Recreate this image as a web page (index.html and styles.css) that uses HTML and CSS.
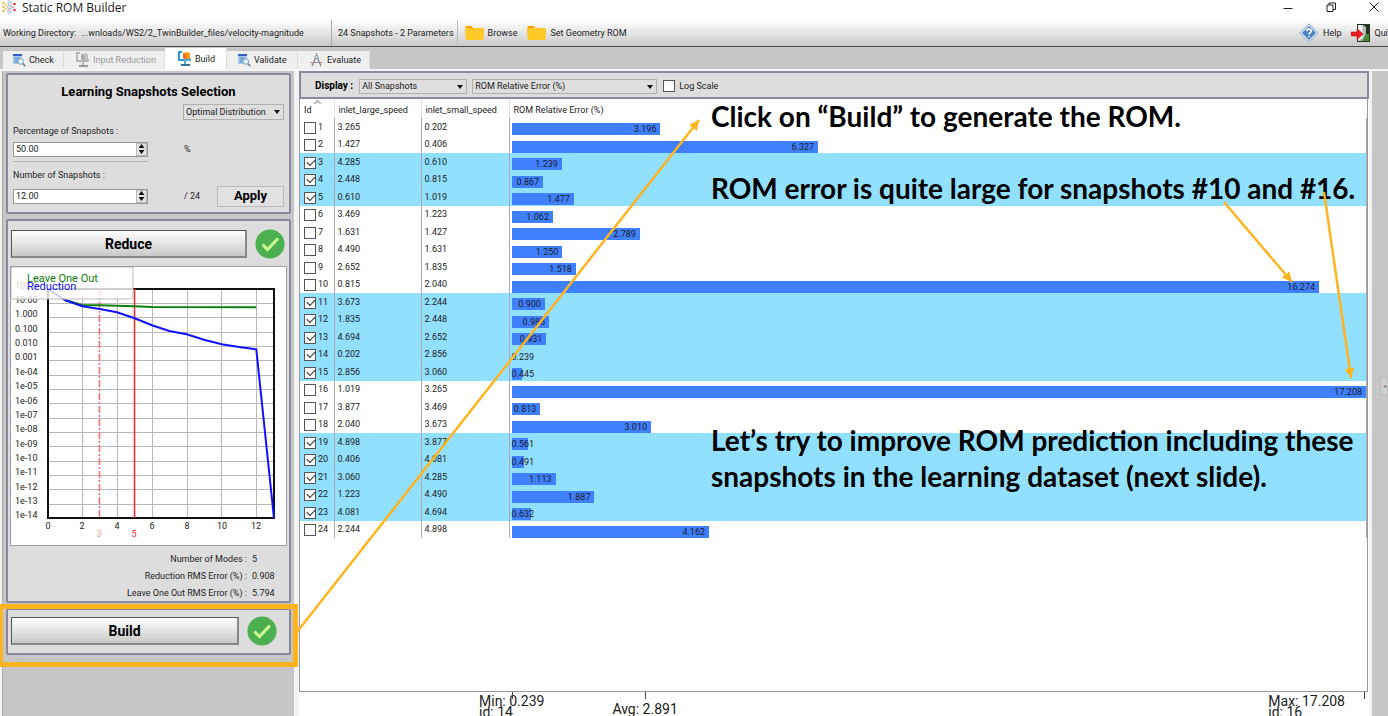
FILE: index.html
```html
<!DOCTYPE html>
<html lang="en">
<head>
<meta charset="utf-8">
<title>Static ROM Builder</title>
<link rel="stylesheet" href="styles.css">
</head>
<body>
<div class="app">
  <header class="titlebar">
    <svg class="app-icon" width="14" height="14" viewBox="0 0 14 14"><g fill="#f2b632"><circle cx="1.500" cy="3" r="1.200"/><circle cx="1.500" cy="7" r="1.200"/><circle cx="1.500" cy="11" r="1.200"/><circle cx="4" cy="5" r="1"/><circle cx="4" cy="9" r="1"/></g><g fill="none" stroke="#8fa6c4"><circle cx="7.500" cy="2.500" r="1.600"/><circle cx="7.500" cy="7" r="1.800"/><circle cx="7.500" cy="11.500" r="1.600"/></g><g fill="#dc3545"><circle cx="12.500" cy="4" r="1.300"/><circle cx="12.500" cy="10" r="1.300"/><circle cx="11" cy="7" r=".8"/></g></svg>
    <h1 class="app-title">Static ROM Builder</h1>
    <div class="window-buttons">
      <button aria-label="Minimize"><svg width="10" height="10" viewBox="0 0 10 10"><path d="M0.500 6.500h9" stroke="#222" fill="none"/></svg></button>
      <button aria-label="Restore"><svg width="10" height="10" viewBox="0 0 10 10"><path d="M1 3h6v6.500h-6zM3 3V1h6.500v6.500H7" stroke="#222" fill="none"/></svg></button>
      <button aria-label="Close"><svg width="10" height="10" viewBox="0 0 10 10"><path d="M.5.5l9 9M9.500.5l-9 9" stroke="#222" fill="none"/></svg></button>
    </div>
  </header>

  <div class="toolbar">
    <div class="directory"><span>Working Directory:</span><span>...wnloads/WS2/2_TwinBuilder_files/velocity-magnitude</span></div>
    <div class="summary">24 Snapshots - 2 Parameters</div>
    <button class="tool"><svg width="19" height="16" viewBox="0 0 19 16"><path d="M.5 2q0-1 1-1h5l2 2h9q1 0 1 1v5H.5z" fill="#ffa000"/><path d="M.5 4.500q0-1.500 1-1.500h16q1.200 0 1.200 1v10q0 1-1 1H1.500q-1 0-1-1z" fill="#ffc928"/></svg>Browse</button>
    <button class="tool"><svg width="19" height="16" viewBox="0 0 19 16"><path d="M.5 2q0-1 1-1h5l2 2h9q1 0 1 1v5H.5z" fill="#ffa000"/><path d="M.5 4.500q0-1.500 1-1.500h16q1.200 0 1.200 1v10q0 1-1 1H1.500q-1 0-1-1z" fill="#ffc928"/></svg>Set Geometry ROM</button>
    <div class="toolbar-end">
      <button class="tool"><svg width="20" height="20" viewBox="0 0 20 20"><path d="M10 .8L19.200 10 10 19.200.8 10z" fill="#dce7f4" stroke="#8ca8cc"/><path d="M10 3l7 7-7 7-7-7z" fill="#4c82c4"/><path d="M7.800 8.200q.2-2 2.300-2 2.200.1 2.200 1.900 0 1-1.200 1.700-1 .6-1 1.600M10.100 13v1.300" fill="none" stroke="#fff" stroke-width="1.700"/></svg>Help</button>
      <button class="tool"><svg width="19" height="20" viewBox="0 0 19 20"><path d="M6 1h13v18H6z" fill="#26351d"/><path d="M7 2h5v15l-5 1z" fill="#eee" /><path d="M11.500 2L15 4v14h-8l4.500-3z" fill="#b9b9b9"/><path d="M15 11h3v7h-7z" fill="#4b8a35"/><path d="M0 9h6V5.500l6 5.500-6 5.500V13H0z" fill="#ee1c24" stroke="#b40000" stroke-width=".5"/></svg>Quit</button>
    </div>
  </div>

  <nav class="tabs">
    <button class="tab tab-check"><svg width="14" height="14" viewBox="0 0 14 14"><path d="M1 1h9v10H1z" fill="#a9cbe8"/><path d="M1 1h9v2H1z" fill="#315fc4"/><path d="M2.500 5h5M2.500 7h4M2.500 9h3" stroke="#4c8bc6"/><circle cx="8.800" cy="8.500" r="2.800" fill="#eef7fc" stroke="#6ba0bd"/><path d="M10.800 10.500l2.500 2.700" stroke="#5b7f99" stroke-width="1.500"/></svg>Check</button>
    <button class="tab tab-input" disabled><svg width="15" height="16" viewBox="0 0 15 16"><path d="M5 1H2v8h5" fill="none" stroke="#b4b4b4" stroke-width="2"/><path d="M6 2l4-1 3 1v5l-3 2-4-2z" fill="#c2c2c2"/><path d="M6 2l3.500 2v5L6 7z" fill="#a6a6a6"/><path d="M13 7v2H8v4" fill="none" stroke="#aaa" stroke-width="1.500"/><path d="M4 14h9" stroke="#999" stroke-width="2"/></svg>Input Reduction</button>
    <button class="tab tab-build"><svg width="15" height="16" viewBox="0 0 15 16"><path d="M5 1H2v8h5" fill="none" stroke="#2b9cd3" stroke-width="2"/><path d="M6 2l4-1 3 1v5l-3 2-4-2z" fill="#ff9c1e"/><path d="M6 2l3.500 2v5L6 7z" fill="#ed6f23"/><path d="M13 7v2H8v4" fill="none" stroke="#2b8fbd" stroke-width="1.500"/><path d="M4 14h9" stroke="#35728f" stroke-width="2"/></svg>Build</button>
    <button class="tab tab-validate"><svg width="14" height="14" viewBox="0 0 14 14"><path d="M1 1h9v10H1z" fill="#a9cbe8"/><path d="M1 1h9v2H1z" fill="#315fc4"/><path d="M2.500 5h5M2.500 7h4M2.500 9h3" stroke="#4c8bc6"/><circle cx="8.800" cy="8.500" r="2.800" fill="#eef7fc" stroke="#6ba0bd"/><path d="M10.800 10.500l2.500 2.700" stroke="#5b7f99" stroke-width="1.500"/></svg>Validate</button>
    <button class="tab tab-evaluate"><svg width="13" height="14" viewBox="0 0 13 14"><path d="M6.500 0v3" stroke="#888"/><path d="M6 4L2 13M7 4l4 9" stroke="#7d8994" stroke-width="1.300"/><circle cx="6.500" cy="3.800" r="1.500" fill="#fff" stroke="#7d8994"/><path d="M.5 9.500h2M10.500 9.500h2" stroke="#d05a52"/><path d="M4.500 9.500h4" stroke="#7d8994"/></svg>Evaluate</button>
  </nav>

  <main class="content">
    <aside class="sidebar">
      <section class="panel selection">
        <h2 class="panel-title">Learning Snapshots Selection</h2>
        <div class="pick distribution"><select aria-label="Distribution"><option>Optimal Distribution</option></select></div>
        <label class="field-label" for="percent">Percentage of Snapshots :</label>
        <div class="field">
          <div class="spin"><input id="percent" type="text" value="50.00"><span class="steps"><button class="up" aria-label="Increase percentage"></button><button class="down" aria-label="Decrease percentage"></button></span></div>
          <span class="unit">%</span>
        </div>
        <hr class="rule">
        <label class="field-label second" for="number">Number of Snapshots :</label>
        <div class="field">
          <div class="spin"><input id="number" type="text" value="12.00"><span class="steps"><button class="up" aria-label="Increase number"></button><button class="down" aria-label="Decrease number"></button></span></div>
          <span class="unit">/ 24</span>
          <button class="apply">Apply</button>
        </div>
      </section>

      <section class="panel reduce">
        <div class="action">
          <button class="big-button">Reduce</button>
          <svg class="done" width="30" height="30" viewBox="0 0 30 30"><circle cx="15" cy="15" r="14.600" fill="#4caf50"/><path d="M7.500 15.500l5 5L23 9.500" fill="none" stroke="#ccff90" stroke-width="3"/></svg>
        </div>
        <div class="chart">
          <svg width="275" height="278" viewBox="0 0 275 278">
            <path class="grid" d="M37 36.500h226M37 50.500h226M37 65.500h226M37 79.500h226M37 93.500h226M37 108.500h226M37 122.500h226M37 136.500h226M37 151.500h226M37 165.500h226M37 179.500h226M37 194.500h226M37 208.500h226M37 222.500h226M37 237.500h226M71.500 22v229M106.500 22v229M141.500 22v229M176.500 22v229M210.500 22v229M245.500 22v229"/>
            <rect x="37" y="22" width="226" height="229" fill="none" stroke="#111" stroke-width="2"/>
            <path d="M88.500 22v229" stroke="#f66" stroke-width="1.500" stroke-dasharray="7 2 2 2"/>
            <path d="M123.500 22v229" stroke="#f22" stroke-width="1.500"/>
            <polyline points="54,33 71.300,38 88.700,38.300 123.700,39.300 141,40 245.300,40.300" fill="none" stroke="#0a800a" stroke-width="2"/>
            <polyline points="37,22 54.300,33.300 71.300,39.300 88.700,42 106,45.300 123.700,51.300 141,58.300 158.300,64 175.700,67.300 193,72.700 210.700,77.300 228,80 245.300,82.300 263,251.300" fill="none" stroke="#11f" stroke-width="2"/>
            <g class="axis">
              <text x="4" y="22">100.0</text><text x="4" y="36">10.00</text><text x="4" y="50">1.000</text><text x="4" y="65">0.100</text><text x="4" y="79">0.010</text><text x="4" y="93">0.001</text><text x="4" y="108">1e-04</text><text x="4" y="122">1e-05</text><text x="4" y="137">1e-06</text><text x="4" y="151">1e-07</text><text x="4" y="165">1e-08</text><text x="4" y="180">1e-09</text><text x="4" y="194">1e-10</text><text x="4" y="208">1e-11</text><text x="4" y="223">1e-12</text><text x="4" y="237">1e-13</text><text x="4" y="251">1e-14</text>
            </g>
            <g class="axis middle">
              <text x="37" y="262">0</text><text x="71" y="262">2</text><text x="106" y="262">4</text><text x="141" y="262">6</text><text x="176" y="262">8</text><text x="211" y="262">10</text><text x="245" y="262">12</text>
              <text x="88" y="270" class="pale">3</text><text x="123" y="270" class="red">5</text>
            </g>
            <rect x="0" y="0" width="122" height="32" rx="2" fill="#fff" fill-opacity=".8" stroke="#bbb"/>
            <text x="16" y="15" class="legend green">Leave One Out</text>
            <text x="16" y="23" class="legend blue">Reduction</text>
          </svg>
        </div>
        <dl class="stats">
          <dt>Number of Modes :</dt><dd>5</dd>
          <dt>Reduction RMS Error (%) :</dt><dd>0.908</dd>
          <dt>Leave One Out RMS Error (%) :</dt><dd>5.794</dd>
        </dl>
      </section>

      <section class="panel build">
        <div class="action">
          <button class="big-button">Build</button>
          <svg class="done" width="30" height="30" viewBox="0 0 30 30"><circle cx="15" cy="15" r="14.600" fill="#4caf50"/><path d="M7.500 15.500l5 5L23 9.500" fill="none" stroke="#ccff90" stroke-width="3"/></svg>
        </div>
      </section>
    </aside>

    <section class="results">
      <div class="display-bar">
        <span class="display-label">Display :</span>
        <div class="pick snapshots"><select aria-label="Snapshots shown"><option>All Snapshots</option></select></div>
        <div class="pick measure"><select aria-label="Measure shown"><option>ROM Relative Error (%)</option></select></div>
        <label class="log"><input class="check" type="checkbox">Log Scale</label>
      </div>
      <div class="table-area">
        <table class="data">
          <colgroup><col class="c-id"><col class="c-large"><col class="c-small"><col></colgroup>
          <thead><tr><th class="sorted">Id</th><th>inlet_large_speed</th><th>inlet_small_speed</th><th>ROM Relative Error (%)</th></tr></thead>
          <tbody>
            <tr><td><label><input class="check" type="checkbox">1</label></td><td>3.265</td><td>0.202</td><td><div class="bar"><i style="width:17.43%"></i><b style="width:17.43%">3.196</b></div></td></tr>
            <tr><td><label><input class="check" type="checkbox">2</label></td><td>1.427</td><td>0.406</td><td><div class="bar"><i style="width:35.88%"></i><b style="width:35.88%">6.327</b></div></td></tr>
            <tr class="on"><td><label><input class="check" type="checkbox" checked>3</label></td><td>4.285</td><td>0.610</td><td><div class="bar"><i style="width:5.89%"></i><b style="width:5.89%">1.239</b></div></td></tr>
            <tr class="on"><td><label><input class="check" type="checkbox" checked>4</label></td><td>2.448</td><td>0.815</td><td><div class="bar"><i style="width:3.70%"></i><b style="width:3.70%">0.867</b></div></td></tr>
            <tr class="on"><td><label><input class="check" type="checkbox" checked>5</label></td><td>0.610</td><td>1.019</td><td><div class="bar"><i style="width:7.30%"></i><b style="width:7.30%">1.477</b></div></td></tr>
            <tr><td><label><input class="check" type="checkbox">6</label></td><td>3.469</td><td>1.223</td><td><div class="bar"><i style="width:4.85%"></i><b style="width:4.85%">1.062</b></div></td></tr>
            <tr><td><label><input class="check" type="checkbox">7</label></td><td>1.631</td><td>1.427</td><td><div class="bar"><i style="width:15.03%"></i><b style="width:15.03%">2.789</b></div></td></tr>
            <tr><td><label><input class="check" type="checkbox">8</label></td><td>4.490</td><td>1.631</td><td><div class="bar"><i style="width:5.96%"></i><b style="width:5.96%">1.250</b></div></td></tr>
            <tr><td><label><input class="check" type="checkbox">9</label></td><td>2.652</td><td>1.835</td><td><div class="bar"><i style="width:7.54%"></i><b style="width:7.54%">1.518</b></div></td></tr>
            <tr><td><label><input class="check" type="checkbox">10</label></td><td>0.815</td><td>2.040</td><td><div class="bar"><i style="width:94.50%"></i><b style="width:94.50%">16.274</b></div></td></tr>
            <tr class="on"><td><label><input class="check" type="checkbox" checked>11</label></td><td>3.673</td><td>2.244</td><td><div class="bar"><i style="width:3.90%"></i><b style="width:3.90%">0.900</b></div></td></tr>
            <tr class="on"><td><label><input class="check" type="checkbox" checked>12</label></td><td>1.835</td><td>2.448</td><td><div class="bar"><i style="width:4.40%"></i><b style="width:4.40%">0.985</b></div></td></tr>
            <tr class="on"><td><label><input class="check" type="checkbox" checked>13</label></td><td>4.694</td><td>2.652</td><td><div class="bar"><i style="width:4.08%"></i><b style="width:4.08%">0.931</b></div></td></tr>
            <tr class="on"><td><label><input class="check" type="checkbox" checked>14</label></td><td>0.202</td><td>2.856</td><td><div class="bar"><i style="width:0%"></i><b style="width:0%">0.239</b></div></td></tr>
            <tr class="on"><td><label><input class="check" type="checkbox" checked>15</label></td><td>2.856</td><td>3.060</td><td><div class="bar"><i style="width:1.21%"></i><b style="width:1.21%">0.445</b></div></td></tr>
            <tr><td><label><input class="check" type="checkbox">16</label></td><td>1.019</td><td>3.265</td><td><div class="bar"><i style="width:100%"></i><b style="width:100%">17.208</b></div></td></tr>
            <tr><td><label><input class="check" type="checkbox">17</label></td><td>3.877</td><td>3.469</td><td><div class="bar"><i style="width:3.38%"></i><b style="width:3.38%">0.813</b></div></td></tr>
            <tr><td><label><input class="check" type="checkbox">18</label></td><td>2.040</td><td>3.673</td><td><div class="bar"><i style="width:16.33%"></i><b style="width:16.33%">3.010</b></div></td></tr>
            <tr class="on"><td><label><input class="check" type="checkbox" checked>19</label></td><td>4.898</td><td>3.877</td><td><div class="bar"><i style="width:1.90%"></i><b style="width:1.90%">0.561</b></div></td></tr>
            <tr class="on"><td><label><input class="check" type="checkbox" checked>20</label></td><td>0.406</td><td>4.081</td><td><div class="bar"><i style="width:1.49%"></i><b style="width:1.49%">0.491</b></div></td></tr>
            <tr class="on"><td><label><input class="check" type="checkbox" checked>21</label></td><td>3.060</td><td>4.285</td><td><div class="bar"><i style="width:5.15%"></i><b style="width:5.15%">1.113</b></div></td></tr>
            <tr class="on"><td><label><input class="check" type="checkbox" checked>22</label></td><td>1.223</td><td>4.490</td><td><div class="bar"><i style="width:9.71%"></i><b style="width:9.71%">1.887</b></div></td></tr>
            <tr class="on"><td><label><input class="check" type="checkbox" checked>23</label></td><td>4.081</td><td>4.694</td><td><div class="bar"><i style="width:2.32%"></i><b style="width:2.32%">0.632</b></div></td></tr>
            <tr><td><label><input class="check" type="checkbox">24</label></td><td>2.244</td><td>4.898</td><td><div class="bar"><i style="width:23.12%"></i><b style="width:23.12%">4.162</b></div></td></tr>
          </tbody>
        </table>
      </div>
      <footer class="scale">
        <div class="mark min">Min: 0.239<br>id: 14</div>
        <div class="mark avg">Avg: 2.891</div>
        <div class="mark max">Max: 17.208<br>id: 16</div>
      </footer>
    </section>
    <div class="edge"><button class="handle" aria-label="Expand side panel">◂</button></div>
  </main>

  <div class="notes">
    <p class="note note-build">Click on “Build” to generate the ROM.</p>
    <p class="note note-error">ROM error is quite large for snapshots #10 and #16.</p>
    <p class="note note-next">Let’s try to improve ROM prediction including these<br>snapshots in the learning dataset (next slide).</p>
    <div class="highlight"></div>
    <svg class="arrows" width="1388" height="716" viewBox="0 0 1388 716">
      <defs><marker id="head" markerUnits="userSpaceOnUse" markerWidth="12" markerHeight="12" refX="10" refY="5" orient="auto"><path d="M0 0l10 5-10 5z" fill="#ffb41f"/></marker></defs>
      <g stroke="#ffb41f" stroke-width="2.500" fill="none"><path d="M297 632L699 120" marker-end="url(#head)"/><path d="M1224 202L1292 282" marker-end="url(#head)"/><path d="M1324 192L1351 378" marker-end="url(#head)"/></g>
    </svg>
  </div>
</div>
</body>
</html>
```
FILE: styles.css
```css
* { box-sizing: border-box; }
body { margin: 0; font: 9px/12px Roboto, "Liberation Sans", sans-serif; color: #1c1c1c; background: #fff; }
button, input, select { font: inherit; color: inherit; margin: 0; }
button { padding: 0; border: 0; background: none; }
h1, h2, p, dl, dd { margin: 0; }
svg { display: block; flex: none; }
.app { position: relative; height: 100vh; overflow: hidden; display: flex; flex-direction: column; }

.titlebar { display: flex; align-items: center; height: 20px; padding: 0 9px 6px 2px; flex: none; }
.app-title { font: 12px/15px "Open Sans", "Noto Sans", sans-serif; margin-left: 6px; }
.window-buttons { display: flex; gap: 33px; margin-left: auto; }

.toolbar { display: flex; align-items: center; height: 27px; flex: none; background: linear-gradient(#fff, #c9c9c9); border-bottom: 1px solid #4a4a4a; padding-left: 3px; overflow: hidden; white-space: nowrap; }
.directory { display: flex; gap: 5px; width: 328px; }
.summary { border-left: 1px solid #aaa; border-right: 1px solid #bbb; padding: 0 3px 0 6px; line-height: 26px; margin-right: 7px; }
.tool { display: flex; align-items: center; gap: 4px; margin-right: 10px; }
.toolbar-end { display: flex; margin-left: auto; width: 89px; flex: none; }

.tabs { display: flex; align-items: flex-end; height: 22px; padding-left: 3px; background: #c6c6c6; flex: none; }
.tab { display: flex; align-items: center; gap: 3px; height: 18px; background: #efefef; border-right: 1px solid #ddd; padding-left: 9px; }
.tab-check { width: 61px; }
.tab-input { width: 101px; color: #999; padding-left: 11px; }
.tab-build { width: 62px; height: 21px; background: #fff; padding-left: 12px; }
.tab-validate { width: 71px; padding-left: 10px; }
.tab-evaluate { width: 72px; padding-left: 12px; gap: 4px; }

.content { display: flex; flex: 1; min-height: 0; padding-left: 2px; border-top: 2px solid #f6f6f6; background: #f3f3f3; }
.sidebar { display: flex; flex-direction: column; gap: 5px; width: 292px; flex: none; background: #c6c6c6; border-left: 1px solid #aaa; padding: 2px 3px 0; }
.panel { background: #ddd; border: 2px solid #89899b; border-radius: 2px; }
.selection { height: 141px; padding: 9px 5px 0; flex: none; }
.panel-title { font-size: 13px; line-height: 16px; text-align: center; color: #000; }
.pick { position: relative; height: 15px; }
.pick select { appearance: none; display: block; width: 100%; height: 100%; padding: 0 2px; border: 1px solid #b0b0b0; border-radius: 0; background: #dedede; line-height: 12px; }
.pick::after { content: ""; position: absolute; right: 4px; top: 6px; border: 3px solid transparent; border-top: 4px solid #111; border-bottom: 0; }
.distribution { width: 101px; margin: 4px 0 0 auto; height: 16px; }
.field-label { display: block; line-height: 12px; margin-top: 5px; }
.field-label.second { margin-top: 7px; }
.field { display: flex; align-items: center; height: 22px; margin-top: 1px; margin-bottom: 1px; }
.second + .field { margin-top: 4px; }
.spin { display: flex; width: 135px; height: 15px; border: 1px solid #999; background: #fff; }
.spin input { flex: 1; min-width: 0; border: 0; padding: 0 2px; background: none; }
.steps { display: flex; flex-direction: column; justify-content: center; align-items: center; gap: 2px; width: 11px; background: #e4e4e4; border: 1px solid #bbb; }
.up, .down { width: 6px; height: 4px; background: #111; clip-path: polygon(50% 0, 100% 100%, 0 100%); }
.down { clip-path: polygon(0 0, 100% 0, 50% 100%); }
.unit { margin-left: 36px; }
.rule { width: 135px; height: 1px; margin: 0; border: 0; background: #b2b2b2; }
.apply { width: 67px; height: 21px; margin-left: auto; border: 1px solid #bbb; background: #e1e1e1; font-weight: bold; font-size: 13px; color: #000; }

.reduce { height: 384px; padding: 8px 2px 0; flex: none; }
.action { display: flex; align-items: center; gap: 8px; height: 30px; padding: 0 2px 0 1px; }
.big-button { flex: 1; height: 28px; border: 1px solid #555; border-right: 2px solid #888; border-bottom: 2px solid #888; background: linear-gradient(#fff, #c8c8c8); font-weight: bold; font-size: 14px; color: #000; }
.chart { height: 280px; margin-top: 7px; border: 1px solid #9a9fa6; background: #fff; }
.grid { stroke: #b9b9b9; fill: none; }
.axis { font-size: 9px; fill: #1c1c1c; }
.middle { text-anchor: middle; }
.pale { fill: #f99; }
.red { fill: #f22; }
.legend { font-size: 11px; }
.green { fill: #0a800a; }
.blue { fill: #11f; }
.stats { display: grid; grid-template-columns: 1fr 35px; column-gap: 5px; line-height: 17px; margin-top: 5px; }
.stats dt { text-align: right; }
.build { height: 47px; padding: 6px 10px 0 2px; flex: none; }

.results { flex: 1; min-width: 0; margin-left: 5px; display: flex; flex-direction: column; background: #fff; }
.display-bar { display: flex; align-items: center; height: 28px; flex: none; background: #ddd; border: 2px solid #89899b; padding: 2px 0 0 14px; }
.display-label { font-weight: bold; font-size: 10px; color: #000; margin-right: 6px; }
.snapshots { width: 108px; margin-right: 5px; }
.measure { width: 185px; margin-right: 6px; }
.log { display: flex; align-items: center; gap: 4px; }
.check { appearance: none; position: relative; width: 12px; height: 12px; border: 1px solid #555; background: #fff; flex: none; }
.check:checked::after { content: ""; position: absolute; left: 2px; top: 1px; width: 7px; height: 4px; border: solid #222; border-width: 0 0 1px 1px; transform: rotate(-45deg); }

.table-area { flex: 1; min-height: 0; border: 1px solid #999; border-top: 0; margin-right: 1px; }
.data { width: 100%; border-collapse: collapse; table-layout: fixed; }
.c-id { width: 34px; }
.c-large { width: 87px; }
.c-small { width: 88px; }
.data th { position: relative; height: 19px; padding: 2px 0 0 4px; font-weight: normal; text-align: left; }
.data th + th { border-left: 1px solid #e2e2e2; }
.sorted::before { content: ""; position: absolute; left: 15px; top: 2px; width: 4px; height: 4px; border: solid #888; border-width: 1px 0 0 1px; transform: rotate(45deg); }
.data td { height: 17px; line-height: 17px; padding: 0 0 0 3px; vertical-align: bottom; }
.data tr:nth-child(odd) td { height: 18px; }
.data td + td { border-left: 1px solid #aaa; }
.data td:first-child { padding-left: 4px; }
.data td:last-child { padding-left: 2px; border-right: 1px solid #aaa; vertical-align: top; }
.data td label { display: flex; align-items: center; gap: 2px; line-height: 17px; }
.data .on { background: #91e0ff; }
.bar { display: grid; align-items: center; height: 12px; margin-top: 5px; line-height: 12px; }
.bar i, .bar b { grid-area: 1 / 1; }
.bar i { height: 12px; background: #3f80ff; }
.bar b { min-width: 26px; padding-right: 4px; text-align: right; font-weight: normal; }

.scale { display: flex; height: 24px; flex: none; font-size: 14px; line-height: 11px; padding: 4px 24px 0 180px; }
.mark { position: relative; white-space: nowrap; }
.mark::before { content: ""; position: absolute; left: 33px; top: -4px; width: 1px; height: 7px; background: #444; }
.avg { margin-left: 68px; padding-top: 8px; }
.max { margin-left: auto; }
.max::before { left: auto; right: -20px; }
.edge { display: flex; align-items: center; justify-content: flex-end; width: 16px; margin-left: 3px; padding-bottom: 16px; background: #c6c6c6; }
.handle { width: 8px; height: 18px; border: 1px solid #bbb; background: #d0d0d0; color: #777; font-size: 6px; }

.notes { position: absolute; inset: 0; pointer-events: none; }
.note { position: absolute; left: 711px; font: bold 28px/36px Lato, sans-serif; color: #000; white-space: nowrap; }
.note-build { top: 98px; }
.note-error { top: 170px; }
.note-next { top: 422px; }
.highlight { position: absolute; left: -2px; top: 604px; width: 300px; height: 63px; border: 5px solid #ffb41f; }
.arrows { position: absolute; left: 0; top: 0; }
```
